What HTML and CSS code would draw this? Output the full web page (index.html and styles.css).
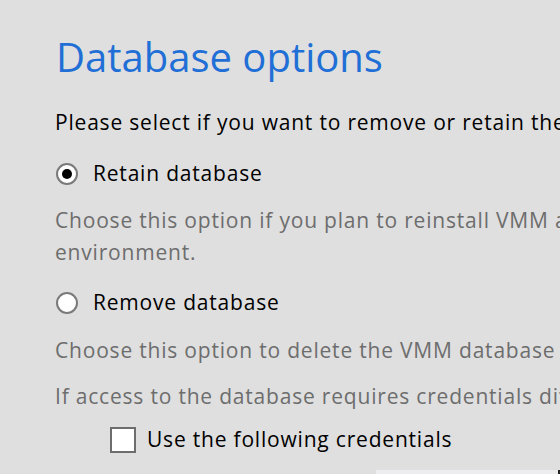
FILE: index.html
```html
<!DOCTYPE html>
<html>
<head>
<meta charset="utf-8">
<link rel="stylesheet" href="styles.css">
</head>
<body>
<div class="page">
  <h1 class="title">Database options</h1>
  <p class="intro">Please select if you want to remove or retain the VMM database when you uninstall VMM.</p>
  <label class="option option-first">
    <span class="radio"><span class="dot"></span></span>
    <span class="option-label">Retain database</span>
  </label>
  <p class="desc desc-first">Choose this option if you plan to reinstall VMM and use the existing database in the same<br>environment.</p>
  <label class="option option-second">
    <span class="radio"></span>
    <span class="option-label">Remove database</span>
  </label>
  <p class="desc">Choose this option to delete the VMM database from the database server.</p>
  <p class="desc desc-tight">If access to the database requires credentials different from the current user, provide them below.</p>
  <label class="check-row">
    <span class="checkbox"></span>
    <span class="option-label">Use the following credentials</span>
  </label>
  <div class="field-row">
    <div class="field"></div>
  </div>
</div>
</body>
</html>
```

FILE: styles.css
```css
html, body {
  margin: 0;
  padding: 0;
  background: #dfdfdf;
  overflow: hidden;
  height: 474px;
}
.page {
  width: 1200px;
  padding: 32px 0 0 55px;
  font-family: "Open Sans", "Noto Sans", sans-serif;
  font-size: 21px;
  letter-spacing: 0.8px;
  color: #000;
  white-space: nowrap;
}
.title {
  margin: 0 0 0 1px;
  font-weight: normal;
  font-size: 40px;
  letter-spacing: 0;
  line-height: 50px;
  color: #1f6fd6;
}
.intro {
  margin: 27px 0 0 0;
  line-height: 27px;
}
.option {
  display: flex;
  align-items: center;
  gap: 15px;
  margin-top: 20px;
  line-height: 27px;
}
.option-first {
  margin-top: 24px;
}
.option-second {
  margin-top: 21px;
}
.radio {
  box-sizing: border-box;
  width: 22px;
  height: 22px;
  border: 2px solid #7a7a7a;
  border-radius: 50%;
  background: #fff;
  display: flex;
  align-items: center;
  justify-content: center;
  margin-left: 1px;
}
.dot {
  width: 10px;
  height: 10px;
  border-radius: 50%;
  background: #000;
}
.desc {
  margin: 18px 0 0 0;
  line-height: 32px;
  color: #6d6d6d;
}
.desc-first {
  margin-top: 17px;
}
.desc-tight {
  margin-top: 14px;
}
.check-row {
  display: flex;
  align-items: center;
  gap: 11px;
  margin: 14px 0 0 55px;
  line-height: 27px;
}
.checkbox {
  box-sizing: border-box;
  width: 26px;
  height: 26px;
  border: 2px solid #6d6d6d;
  background: #fff;
}
.field-row {
  margin: 17px 0 0 321px;
}
.field {
  width: 182px;
  height: 4px;
  background: #ededf0;
  border-right: 2px solid #222;
}
```
